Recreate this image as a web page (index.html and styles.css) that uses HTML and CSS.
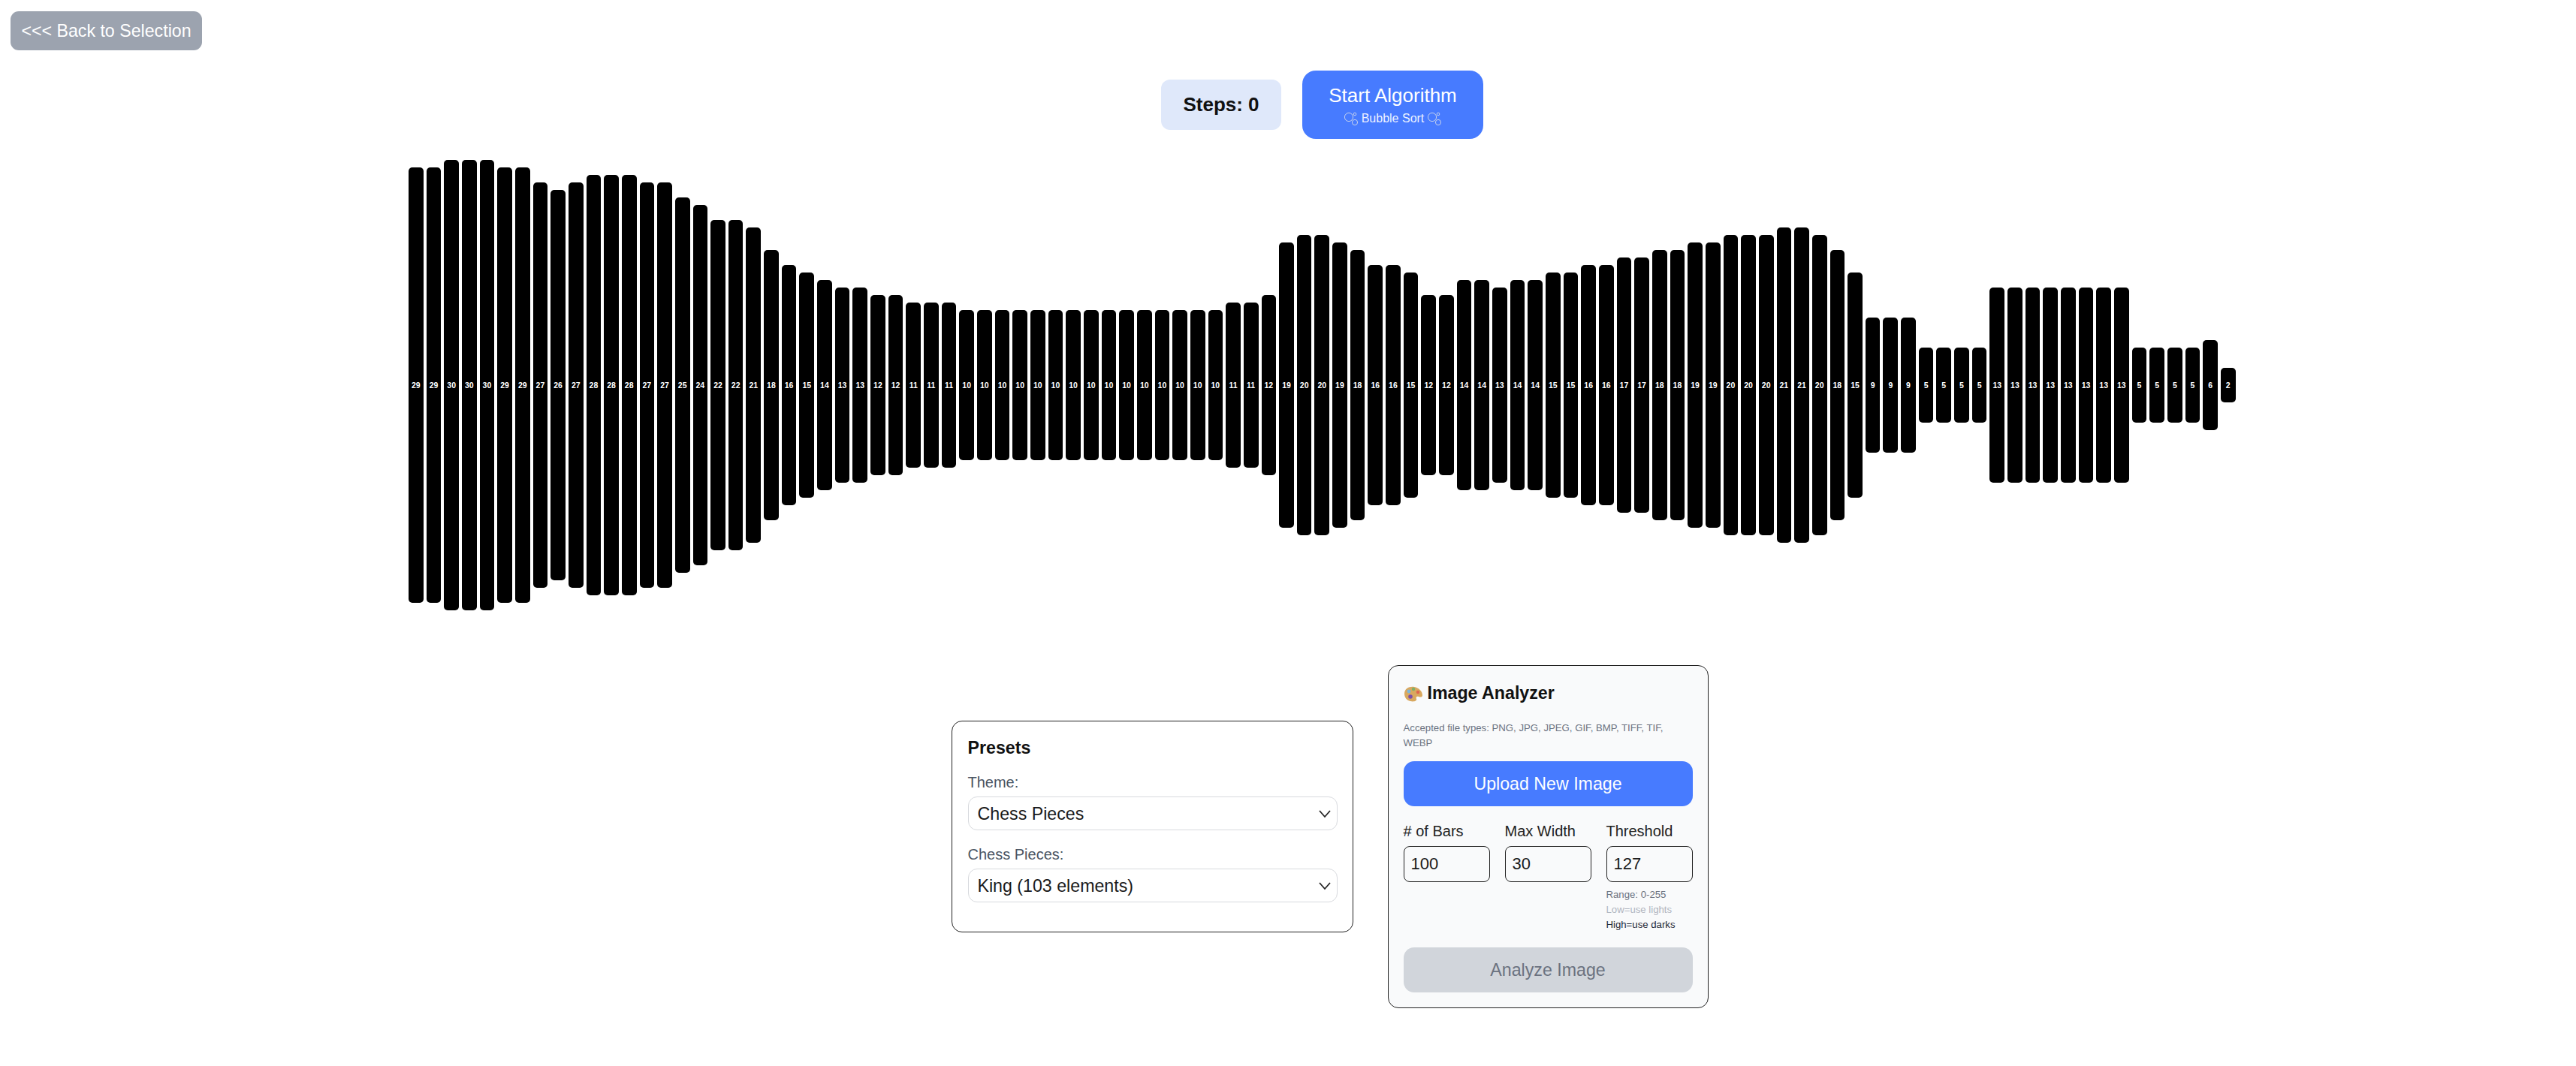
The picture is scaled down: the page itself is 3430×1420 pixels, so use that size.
FILE: index.html
```html
<html>
<head>
  <title>Bubble Sort</title>
  <link rel="stylesheet" href="styles.css">
</head>
<body>
  <button class="back-btn">&lt;&lt;&lt; Back to Selection</button>

  <div class="main">
    <div class="controls">
      <div class="steps">Steps: 0</div>
      <button class="start-btn">
        <span class="start-title">Start Algorithm</span>
        <span class="start-sub">
          <svg class="bubbles" viewBox="0 0 20 20"><circle cx="7" cy="8" r="5.6"/><circle cx="15" cy="15" r="3.6"/><circle cx="15" cy="4" r="1.8"/></svg>
          Bubble Sort
          <svg class="bubbles" viewBox="0 0 20 20"><circle cx="7" cy="8" r="5.6"/><circle cx="15" cy="15" r="3.6"/><circle cx="15" cy="4" r="1.8"/></svg>
        </span>
      </button>
    </div>

    <div class="bars" id="bars"></div>

    <div class="panels">
      <div class="panel presets">
        <h3>Presets</h3>
        <label class="field-label">Theme:</label>
        <div class="select-wrap">
          <select><option>Chess Pieces</option></select>
          <svg class="chevron" viewBox="0 0 18 12"><path d="M2 2 L9 10 L16 2"/></svg>
        </div>
        <label class="field-label">Chess Pieces:</label>
        <div class="select-wrap">
          <select><option>King (103 elements)</option></select>
          <svg class="chevron" viewBox="0 0 18 12"><path d="M2 2 L9 10 L16 2"/></svg>
        </div>
      </div>

      <div class="panel analyzer">
        <h3>
          <svg class="palette" viewBox="0 0 26 22">
            <path class="palette-wood" d="M1 11 C1 4 8 1 14 2 C20 3 25 8 25 13 C25 16 22 16 20 15 C17 14 16 16 17 18 C18 21 13 22 9 21 C4 20 1 16 1 11 Z"/>
            <circle cx="7" cy="8" r="2.4" fill="#7bb6d9"/>
            <circle cx="13" cy="5" r="2.2" fill="#7fb069"/>
            <circle cx="19" cy="9" r="2.2" fill="#e0654f"/>
            <circle cx="9" cy="15" r="2.8" fill="#7d4fa8"/>
          </svg>
          Image Analyzer
        </h3>
        <p class="file-types">Accepted file types: PNG, JPG, JPEG, GIF, BMP, TIFF, TIF, WEBP</p>
        <button class="wide-btn upload-btn">Upload New Image</button>
        <div class="inputs">
          <div class="input-col">
            <label>#&nbsp;of Bars</label>
            <input type="text" value="100">
          </div>
          <div class="input-col">
            <label>Max Width</label>
            <input type="text" value="30">
          </div>
          <div class="input-col">
            <label>Threshold</label>
            <input type="text" value="127">
            <div class="hint hint-range">Range: 0-255</div>
            <div class="hint hint-low">Low=use lights</div>
            <div class="hint hint-high">High=use darks</div>
          </div>
        </div>
        <button class="wide-btn analyze-btn" disabled>Analyze Image</button>
      </div>
    </div>
  </div>

  <script src="script.js"></script>
</body>
</html>
```

FILE: styles.css
```css
body {
  font-family: "Liberation Sans", Arial, sans-serif;
  margin: 0;
  padding: 0;
  background-color: #fff;
  color: #111;
}
button {
  font-family: inherit;
  border: none;
}
.back-btn {
  position: absolute;
  top: 15px;
  left: 14px;
  width: 255px;
  height: 52px;
  background-color: #9ca3af;
  color: #fff;
  font-size: 23.2px;
  border-radius: 11px;
  padding: 0;
}
.main {
  padding: 94px 0 0 91px;
}
.controls {
  display: flex;
  justify-content: center;
  align-items: center;
  gap: 28px;
}
.steps {
  width: 160px;
  height: 67px;
  display: flex;
  justify-content: center;
  align-items: center;
  background-color: #dfe8fa;
  border-radius: 12px;
  font-size: 26px;
  font-weight: bold;
}
.start-btn {
  width: 241px;
  height: 91px;
  background-color: #477bff;
  color: #fff;
  border-radius: 18px;
  padding: 0;
  display: flex;
  flex-direction: column;
  align-items: center;
  justify-content: center;
  gap: 5px;
}
.start-title {
  font-size: 26px;
}
.start-sub {
  font-size: 16px;
  opacity: 0.9;
  display: flex;
  align-items: center;
  gap: 4px;
}
.bubbles {
  width: 20px;
  height: 20px;
  fill: none;
  stroke: #d5dcec;
  stroke-width: 1;
}
.bars {
  width: 2433px;
  height: 600px;
  margin: 28px auto 0;
  display: flex;
  align-items: center;
  gap: 4px;
}
.bar {
  flex: 1;
  background-color: #000;
  color: #fff;
  border-radius: 5px;
  font-size: 10.5px;
  font-weight: bold;
  display: flex;
  justify-content: center;
  align-items: center;
}
.panels {
  display: flex;
  justify-content: center;
  align-items: flex-start;
  gap: 46px;
  margin: 73px 0 0 20px;
}
.panel {
  border: 1.5px solid #222;
  border-radius: 14px;
  box-sizing: border-box;
}
.panel h3 {
  margin: 0;
  font-size: 23.2px;
  line-height: 27px;
  font-weight: bold;
}
.presets {
  width: 535px;
  height: 282px;
  margin-top: 74px;
  padding: 22px 20px 22px 21px;
}
.field-label {
  display: block;
  font-size: 20px;
  color: #4b5563;
  margin: 21px 0 7px;
}
.select-wrap {
  position: relative;
}
.select-wrap select {
  width: 100%;
  height: 45px;
  appearance: none;
  background-color: #fff;
  border: 1px solid #d8dade;
  border-radius: 12px;
  padding: 0 12px;
  font-family: inherit;
  font-size: 23.2px;
  color: #1a1a1a;
}
.chevron {
  position: absolute;
  top: 17px;
  right: 8px;
  width: 18px;
  height: 12px;
  fill: none;
  stroke: #222;
  stroke-width: 1.8;
}
.analyzer {
  width: 427px;
  height: 457px;
  padding: 23px 20px;
  background-color: #f9fafb;
}
.analyzer h3 {
  display: flex;
  align-items: center;
  gap: 6px;
}
.palette {
  width: 26px;
  height: 22px;
}
.palette-wood {
  fill: #d9a85f;
}
.file-types {
  margin: 23px 0 14px;
  font-size: 13.2px;
  line-height: 20px;
  color: #6b7280;
}
.wide-btn {
  display: block;
  width: 100%;
  height: 60px;
  border-radius: 14px;
  font-size: 23.2px;
  padding: 0;
}
.upload-btn {
  background-color: #477bff;
  color: #fff;
}
.analyze-btn {
  background-color: #d1d5db;
  color: #6b7280;
  margin-top: 20px;
}
.inputs {
  display: flex;
  gap: 20px;
  margin-top: 22px;
}
.input-col {
  width: 115px;
}
.input-col label {
  display: block;
  font-size: 20px;
  line-height: 23px;
  color: #222;
  margin-bottom: 8px;
}
.input-col input {
  display: block;
  width: 100%;
  height: 48px;
  box-sizing: border-box;
  border: 1.5px solid #222;
  border-radius: 8px;
  background: transparent;
  padding: 0 9px;
  font-family: inherit;
  font-size: 22px;
  color: #1a1a1a;
  margin-bottom: 7px;
}
.hint {
  font-size: 13.2px;
  line-height: 20px;
}
.hint-range {
  color: #6b7280;
}
.hint-low {
  color: #b0b5bf;
}
.hint-high {
  color: #1f2937;
}
```

FILE: script.js
```js
// Bar values for the King preset
const values = [
  29, 29, 30, 30, 30, 29, 29, 27, 26, 27, 28, 28, 28, 27, 27, 25, 24, 22, 22, 21, 18, 16, 15, 14, 13,
  13, 12, 12, 11, 11, 11, 10, 10, 10, 10, 10, 10, 10, 10, 10, 10, 10, 10, 10, 10, 10, 11, 11, 12, 19,
  20, 20, 19, 18, 16, 16, 15, 12, 12, 14, 14, 13, 14, 14, 15, 15, 16, 16, 17, 17, 18, 18, 19, 19, 20,
  20, 20, 21, 21, 20, 18, 15, 9, 9, 9, 5, 5, 5, 5, 13, 13, 13, 13, 13, 13, 13, 13, 5, 5, 5, 5, 6, 2
];

const barsElement = document.getElementById('bars');

values.forEach((value) => {
  const bar = document.createElement('div');
  bar.className = 'bar';
  bar.style.height = Math.max(value * 20, 46) + 'px';
  bar.innerText = value;
  barsElement.appendChild(bar);
});
```
